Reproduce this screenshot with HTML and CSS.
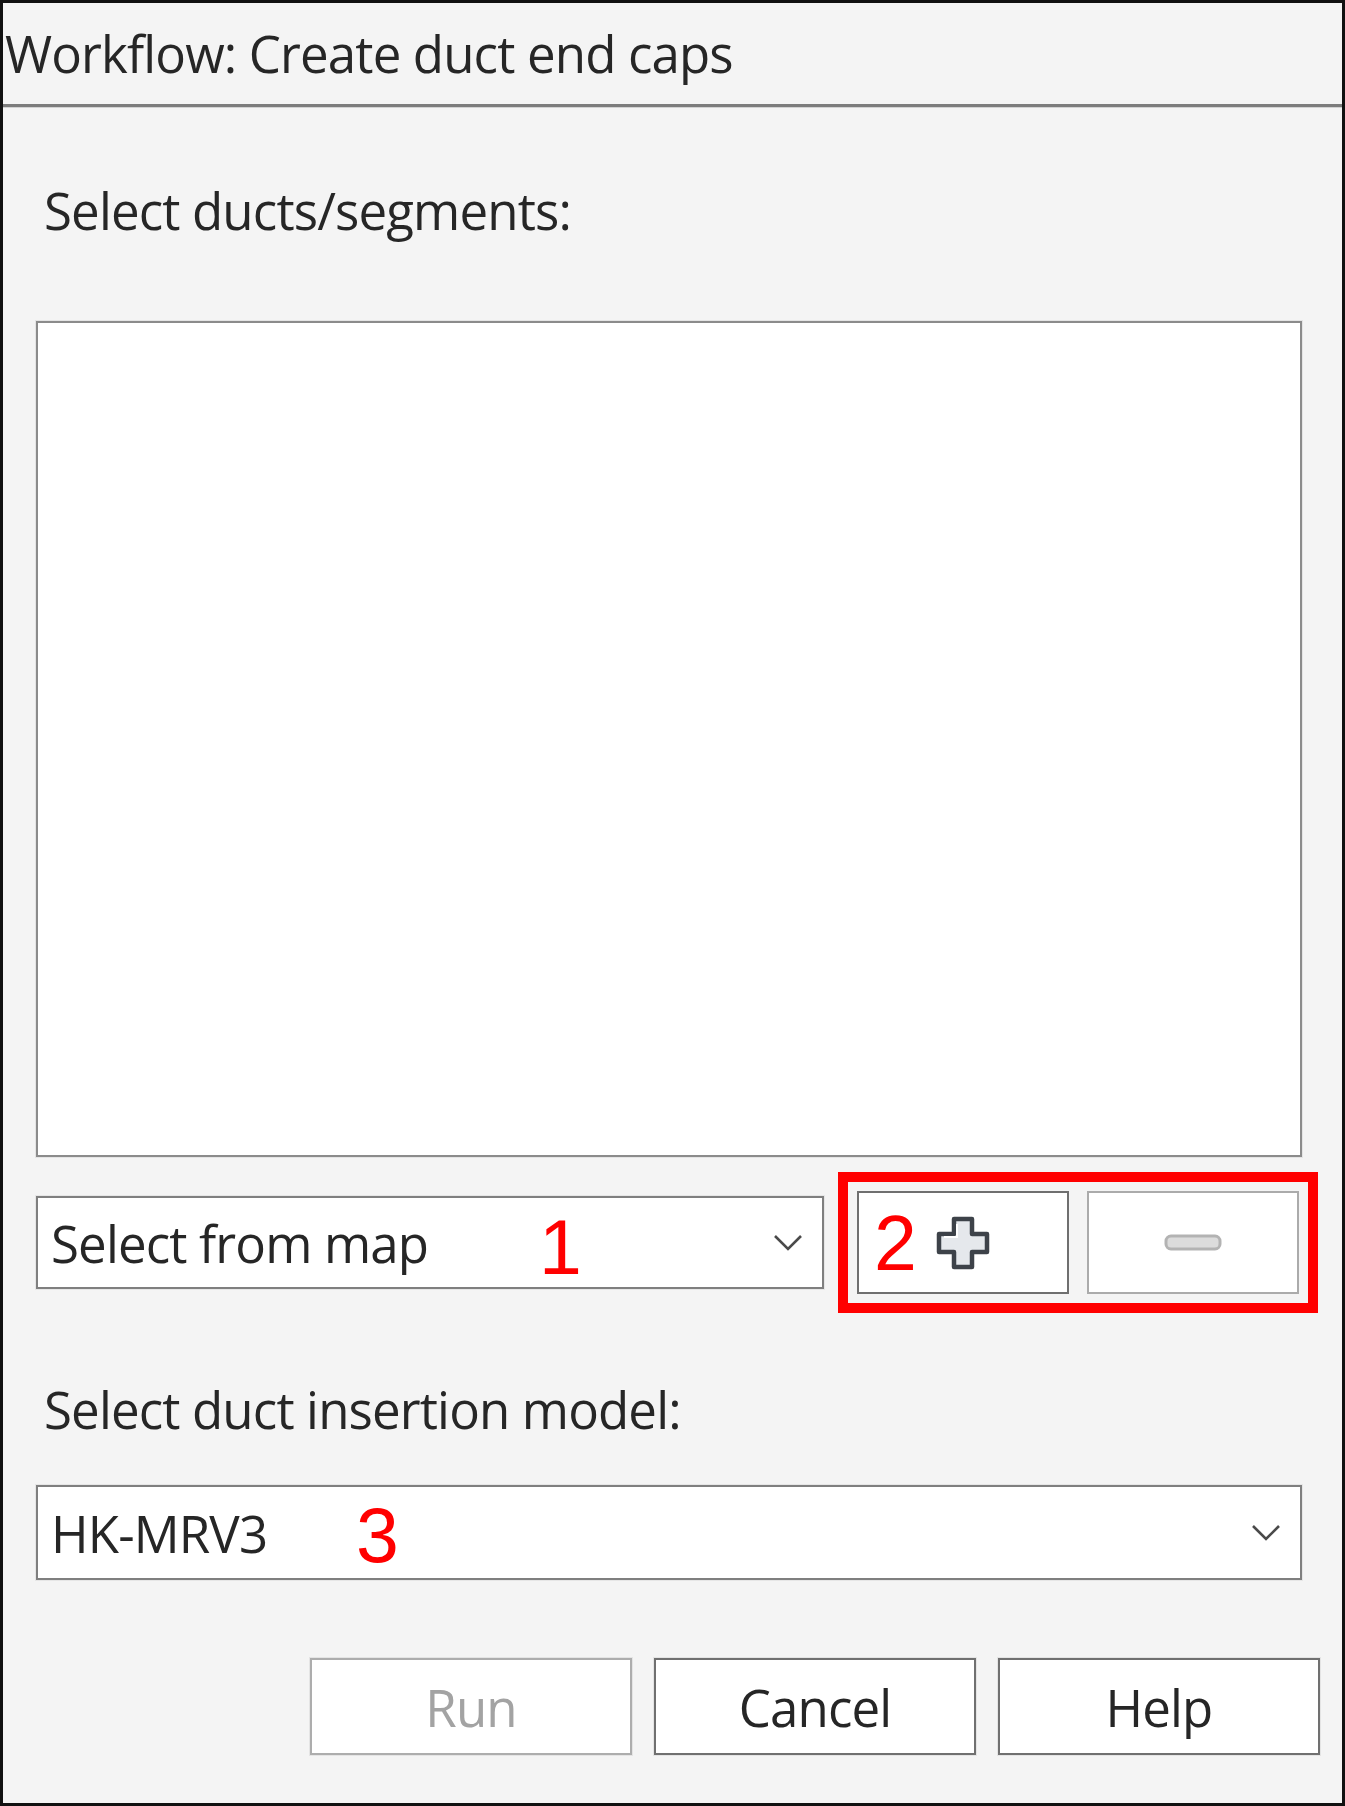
FILE: index.html
```html
<!DOCTYPE html>
<html lang="en">
<head>
<meta charset="utf-8">
<title>Workflow: Create duct end caps</title>
<link rel="stylesheet" href="styles.css">
</head>
<body>
<div class="dialog">
  <div class="titlebar">Workflow: Create duct end caps</div>
  <div class="divider"></div>
  <div class="content">
    <div class="label label-first">Select ducts/segments:</div>
    <div class="listbox"></div>
    <div class="select-row">
      <div class="combo combo-short">
        <span class="combo-text">Select from map</span>
        <span class="anno anno-1">1</span>
        <svg class="chevron" width="30" height="17" viewBox="0 0 30 17"><path d="M2 2 L15 15 L28 2" fill="none" stroke="#4a4a4a" stroke-width="2.6"/></svg>
      </div>
      <div class="btn-group">
        <div class="icon-btn">
          <span class="anno anno-2">2</span>
          <svg width="54" height="54" viewBox="0 0 54 54"><path d="M18 3 H36 V18 H51 V36 H36 V51 H18 V36 H3 V18 H18 Z" fill="#e5e8ec" stroke="#3d4249" stroke-width="4.5" stroke-linejoin="round"/><path d="M21 8 V21 H8" fill="none" stroke="#ffffff" stroke-width="2"/></svg>
        </div>
        <div class="icon-btn icon-btn-disabled">
          <svg width="58" height="17" viewBox="0 0 58 17"><rect x="2" y="2" width="54" height="13" rx="5" fill="#dcdcdc" stroke="#b3b3b3" stroke-width="3"/></svg>
        </div>
      </div>
    </div>
    <div class="label label-second">Select duct insertion model:</div>
    <div class="combo combo-wide">
      <span class="combo-text">HK-MRV3</span>
      <span class="anno anno-3">3</span>
      <svg class="chevron" width="30" height="17" viewBox="0 0 30 17"><path d="M2 2 L15 15 L28 2" fill="none" stroke="#4a4a4a" stroke-width="2.6"/></svg>
    </div>
    <div class="actions">
      <div class="btn btn-disabled">Run</div>
      <div class="btn">Cancel</div>
      <div class="btn">Help</div>
    </div>
  </div>
</div>
</body>
</html>
```
FILE: styles.css
```css
html, body {
  margin: 0;
  padding: 0;
  background: #ffffff;
}

.dialog {
  width: 1345px;
  height: 1806px;
  box-sizing: border-box;
  border: 3px solid #111111;
  background: #f4f4f4;
  display: flex;
  flex-direction: column;
  font-family: "Open Sans", "Noto Sans", sans-serif;
  font-size: 51px;
  line-height: 60px;
  letter-spacing: -0.85px;
  color: #262626;
}

.titlebar {
  height: 101px;
  box-sizing: border-box;
  padding: 20px 0 0 2px;
  white-space: nowrap;
}

.divider {
  height: 1px;
  border-top: 3px solid #7c7c7c;
  background: #d2d2d2;
}

.content {
  display: flex;
  flex-direction: column;
  padding: 0 40px 0 33px;
}

.label {
  padding-left: 8px;
  white-space: nowrap;
}

.label-first {
  margin-top: 72px;
}

.listbox {
  margin-top: 81px;
  height: 836px;
  box-sizing: border-box;
  border: 2px solid #8b8b8b;
  background: #ffffff;
  box-shadow: 0 0 0 1px #e4e4e4;
}

.select-row {
  margin-top: 34px;
  height: 103px;
  display: flex;
  align-items: center;
}

.combo {
  position: relative;
  box-sizing: border-box;
  border: 2px solid #7f7f7f;
  background: #ffffff;
  display: flex;
  align-items: center;
  padding: 0 19px 0 13px;
  box-shadow: 0 0 0 1px #e6e6e6;
}

.combo-short {
  width: 788px;
  height: 93px;
}

.combo-wide {
  margin-top: 46px;
  height: 95px;
}

.combo-text {
  white-space: nowrap;
}

.chevron {
  margin-left: auto;
  flex: none;
}

.anno {
  position: absolute;
  font-family: "Liberation Sans", Arial, sans-serif;
  font-size: 77px;
  line-height: 77px;
  letter-spacing: 0;
  color: #ff0000;
}

.anno-1 {
  left: 501px;
  top: 11px;
}

.anno-3 {
  left: 318px;
  top: 10px;
}

.anno-2 {
  left: 15px;
  top: 12px;
}

.btn-group {
  margin-left: 33px;
  display: flex;
  gap: 18px;
  outline: 10px solid #ff0000;
  outline-offset: 9px;
}

.icon-btn {
  position: relative;
  width: 212px;
  height: 103px;
  box-sizing: border-box;
  border: 2px solid #6f6f6f;
  background: #ffffff;
  display: flex;
  align-items: center;
  justify-content: center;
}

.icon-btn-disabled {
  border-color: #ababab;
}

.label-second {
  margin-top: 85px;
}

.actions {
  margin-top: 78px;
  margin-right: -18px;
  display: flex;
  justify-content: flex-end;
  gap: 22px;
}

.btn {
  width: 322px;
  height: 97px;
  box-sizing: border-box;
  border: 2px solid #707070;
  background: #ffffff;
  display: flex;
  align-items: center;
  justify-content: center;
  box-shadow: 0 0 0 1px #e4e4e4;
}

.btn-disabled {
  border-color: #adadad;
  color: #a3a3a3;
}
```
